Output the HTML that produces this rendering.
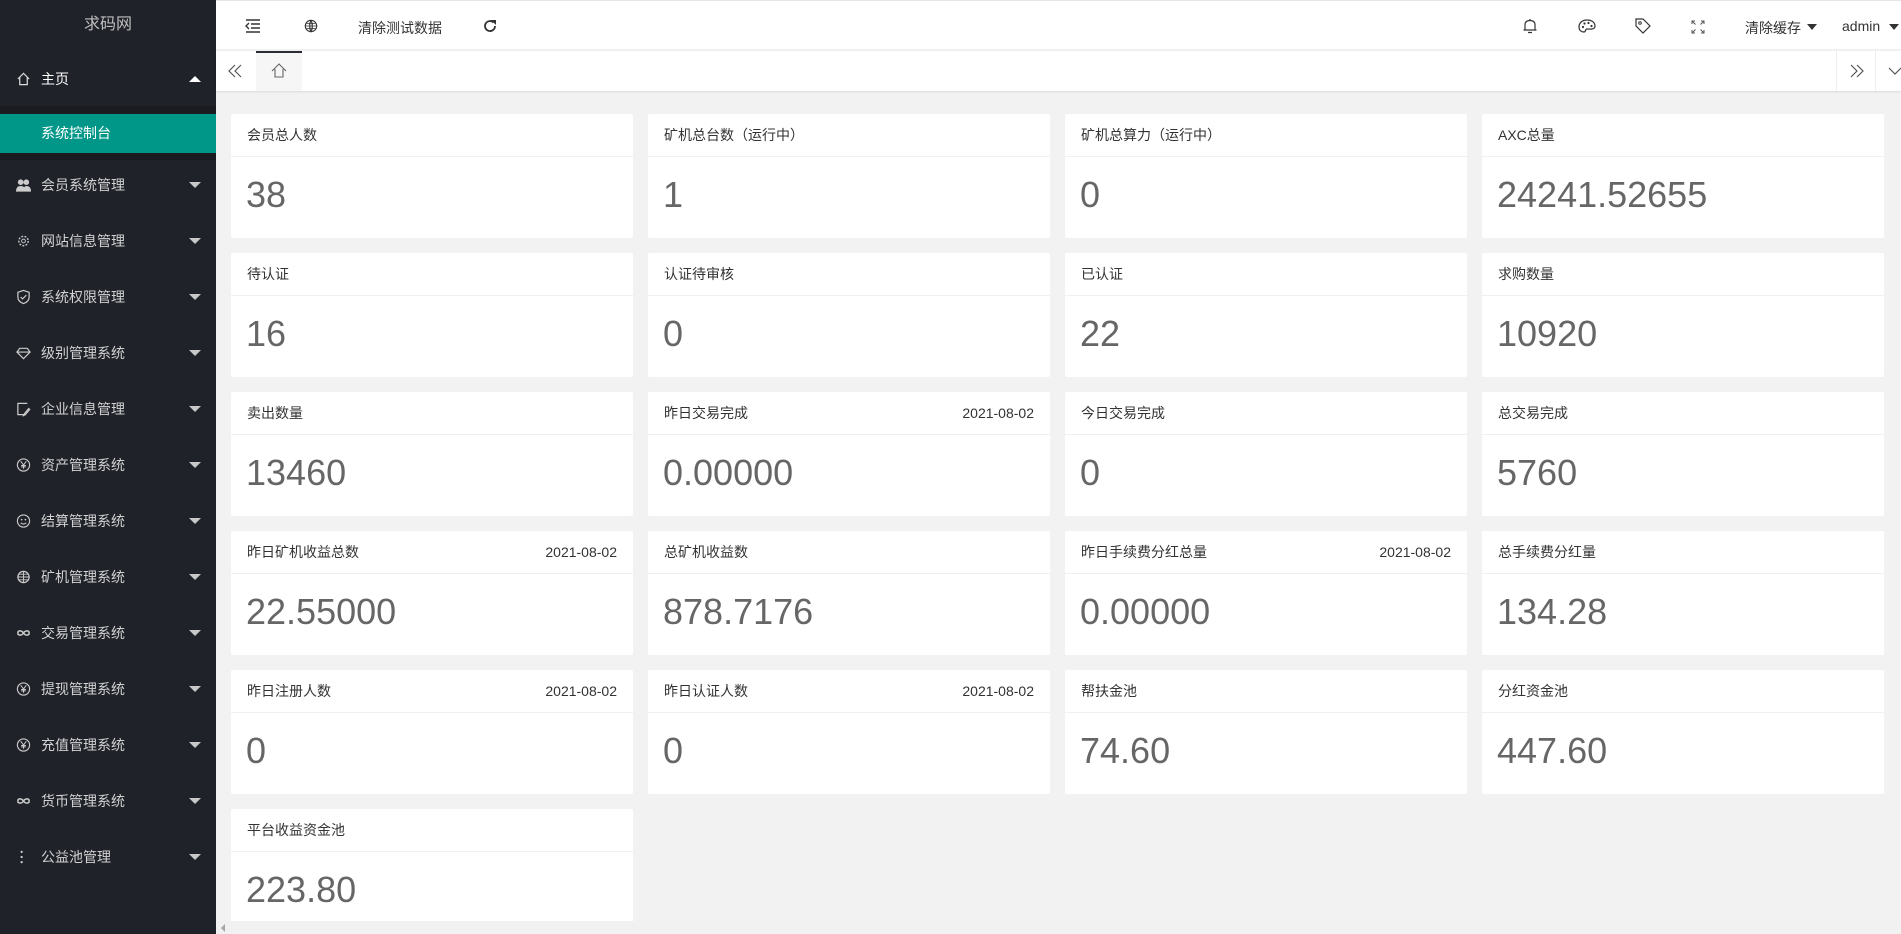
<!DOCTYPE html>
<html><head><meta charset="utf-8"><style>
*{margin:0;padding:0;box-sizing:border-box}
body{width:1901px;height:934px;overflow:hidden;background:#f2f2f2;font-family:"Liberation Sans","Noto Sans CJK SC",sans-serif;position:relative}
.side{position:absolute;left:0;top:0;width:216px;height:934px;background:#20222a}
.logo{height:50px;line-height:50px;text-align:center;color:#bfbfbf;font-size:16px}
.it{position:absolute;left:0;width:216px;height:56px;color:#d2d2d2;font-size:14px}
.it .tx{position:absolute;left:41px;top:50%;transform:translateY(-50%)}
.it .ic{position:absolute;left:16px;top:50%;transform:translateY(-50%);width:15px;height:15px}
.it .ar{position:absolute;left:189px;top:50%;margin-top:-3px;border-left:6px solid transparent;border-right:6px solid transparent;border-top:6px solid #c8c8c8}
.act{position:absolute;left:0;top:114px;width:216px;height:39px;background:#009688;color:#fff;font-size:14px;line-height:39px;padding-left:41px}
.sub{position:absolute;left:0;top:106px;width:216px;height:54px;background:#1a1c22}
.top{position:absolute;left:216px;top:0;width:1685px;height:50px;background:#fff;border-bottom:1px solid #f0f0f0;border-top:1px solid #e6e6e6}
.tabs{position:absolute;left:216px;top:51px;width:1685px;height:40px;background:#fff;box-shadow:0 1px 2px rgba(0,0,0,.1)}
.tt{position:absolute;font-size:14px;color:#333;top:17px}
.card{position:absolute;width:402px;height:124px;background:#fff;border-radius:2px}
.card .h{height:43px;border-bottom:1px solid #f0f0f0;padding:0 16px;line-height:42px;font-size:14px;color:#333;display:flex;justify-content:space-between}
.card .n{font-size:36px;color:#666;padding-left:15px;line-height:76px}
</style></head><body>
<div class="side">
<div class="logo">求码网</div>
<div class="it" style="top:51px"><svg class="ic" viewBox="0 0 16 16"><path d="M2 8L8 2L14 8M4 6V14H12V6" fill="none" stroke="#ddd" stroke-width="1.3"/></svg><span class="tx" style="color:#fff">主页</span><span class="ar" style="border-top:0;border-bottom:6px solid #fff"></span></div>
<div class="sub"></div>
<div class="act">系统控制台</div>
<div class="it" style="top:157px"><svg class="ic" viewBox="0 0 16 16"><circle cx="5" cy="5" r="3" fill="#ccc"/><circle cx="11" cy="5" r="3" fill="#ccc"/><path d="M0 15Q0 9 5 9Q10 9 10 15ZM7 15Q8 9 11 9Q16 9 16 15Z" fill="#ccc"/></svg><span class="tx">会员系统管理</span><span class="ar"></span></div>
<div class="it" style="top:213px"><svg class="ic" viewBox="0 0 16 16"><circle cx="8" cy="8" r="5" fill="none" stroke="#ccc" stroke-width="1.5" stroke-dasharray="2 1.5"/><circle cx="8" cy="8" r="2" fill="none" stroke="#ccc"/></svg><span class="tx">网站信息管理</span><span class="ar"></span></div>
<div class="it" style="top:269px"><svg class="ic" viewBox="0 0 16 16"><path d="M8 1L14 3V8Q14 13 8 15Q2 13 2 8V3Z M5 8L7 10L11 6" fill="none" stroke="#ccc" stroke-width="1.3"/></svg><span class="tx">系统权限管理</span><span class="ar"></span></div>
<div class="it" style="top:325px"><svg class="ic" viewBox="0 0 16 16"><path d="M4 3H12L15 7L8 14L1 7Z M1 7H15" fill="none" stroke="#ccc" stroke-width="1.3"/></svg><span class="tx">级别管理系统</span><span class="ar"></span></div>
<div class="it" style="top:381px"><svg class="ic" viewBox="0 0 16 16"><path d="M12 2H2V14H8M14 7L9 13L8 15L10 14L15 8" fill="none" stroke="#ccc" stroke-width="1.3"/></svg><span class="tx">企业信息管理</span><span class="ar"></span></div>
<div class="it" style="top:437px"><svg class="ic" viewBox="0 0 16 16"><circle cx="8" cy="8" r="6.5" fill="none" stroke="#ccc" stroke-width="1.2"/><path d="M5 4L8 8L11 4M8 8V12M5.5 8.5H10.5M5.5 10H10.5" fill="none" stroke="#ccc" stroke-width="1.1"/></svg><span class="tx">资产管理系统</span><span class="ar"></span></div>
<div class="it" style="top:493px"><svg class="ic" viewBox="0 0 16 16"><circle cx="8" cy="8" r="6.5" fill="none" stroke="#ccc" stroke-width="1.2"/><circle cx="6" cy="6.5" r=".9" fill="#ccc"/><circle cx="10" cy="6.5" r=".9" fill="#ccc"/><path d="M5 10Q8 12.5 11 10" fill="none" stroke="#ccc" stroke-width="1.1"/></svg><span class="tx">结算管理系统</span><span class="ar"></span></div>
<div class="it" style="top:549px"><svg class="ic" viewBox="0 0 16 16"><circle cx="8" cy="8" r="6" fill="none" stroke="#ccc" stroke-width="1.3"/><path d="M2 8H14M8 2V14M3 5H13M3 11H13" stroke="#ccc" stroke-width="1"/></svg><span class="tx">矿机管理系统</span><span class="ar"></span></div>
<div class="it" style="top:605px"><svg class="ic" viewBox="0 0 16 16"><path d="M8 8C6 5 2 5 2 8S6 11 8 8S14 5 14 8S10 11 8 8" fill="none" stroke="#ccc" stroke-width="1.6"/></svg><span class="tx">交易管理系统</span><span class="ar"></span></div>
<div class="it" style="top:661px"><svg class="ic" viewBox="0 0 16 16"><circle cx="8" cy="8" r="6.5" fill="none" stroke="#ccc" stroke-width="1.2"/><path d="M5 4L8 8L11 4M8 8V12M5.5 8.5H10.5M5.5 10H10.5" fill="none" stroke="#ccc" stroke-width="1.1"/></svg><span class="tx">提现管理系统</span><span class="ar"></span></div>
<div class="it" style="top:717px"><svg class="ic" viewBox="0 0 16 16"><circle cx="8" cy="8" r="6.5" fill="none" stroke="#ccc" stroke-width="1.2"/><path d="M5 4L8 8L11 4M8 8V12M5.5 8.5H10.5M5.5 10H10.5" fill="none" stroke="#ccc" stroke-width="1.1"/></svg><span class="tx">充值管理系统</span><span class="ar"></span></div>
<div class="it" style="top:773px"><svg class="ic" viewBox="0 0 16 16"><path d="M8 8C6 5 2 5 2 8S6 11 8 8S14 5 14 8S10 11 8 8" fill="none" stroke="#ccc" stroke-width="1.6"/></svg><span class="tx">货币管理系统</span><span class="ar"></span></div>
<div class="it" style="top:829px"><svg class="ic" viewBox="0 0 16 16"><circle cx="6" cy="2.5" r="1.2" fill="#ccc"/><circle cx="6" cy="8" r="1.2" fill="#ccc"/><circle cx="6" cy="13.5" r="1.2" fill="#ccc"/></svg><span class="tx">公益池管理</span><span class="ar"></span></div>
</div>

<div class="top">
<svg style="position:absolute;left:29px;top:18px" width="16" height="14" viewBox="0 0 16 14"><path d="M1 1H15M6 5H15M6 9H15M1 13H15M4 4L1 7L4 10" fill="none" stroke="#333" stroke-width="1.4"/></svg>
<svg style="position:absolute;left:88px;top:18px" width="14" height="14" viewBox="0 0 16 16"><circle cx="8" cy="8" r="6.5" fill="none" stroke="#333" stroke-width="1.3"/><path d="M1.5 8H14.5M8 1.5V14.5M3 5H13M3 11H13M8 1.5Q4 8 8 14.5Q12 8 8 1.5" fill="none" stroke="#333" stroke-width=".9"/></svg>
<span class="tt" style="left:142px">清除测试数据</span>
<svg style="position:absolute;left:266px;top:17px" width="16" height="16" viewBox="0 0 16 16"><path d="M13 8A5 5 0 1 1 11.5 4.5" fill="none" stroke="#333" stroke-width="1.8"/><path d="M9 2H14V7Z" fill="#333"/></svg>
<svg style="position:absolute;left:1306px;top:17px" width="16" height="17" viewBox="0 0 16 17"><path d="M3 12V7Q3 2.5 8 2.5Q13 2.5 13 7V12H14.5H1.5M6 14.5H10M8 1V2.5" fill="none" stroke="#333" stroke-width="1.2"/></svg>
<svg style="position:absolute;left:1362px;top:17px" width="18" height="16" viewBox="0 0 18 16"><path d="M9 2C4 2 1 5 1 9C1 12 3 14 6 14C8 14 7 11 9 11C12 11 17 12 17 8C17 4 13 2 9 2Z" fill="none" stroke="#333" stroke-width="1.2"/><circle cx="5" cy="9" r="1.1" fill="#333"/><circle cx="6.5" cy="5.5" r="1.1" fill="#333"/><circle cx="10.5" cy="5" r="1.1" fill="#333"/><circle cx="13.5" cy="8" r="1.1" fill="#333"/></svg>
<svg style="position:absolute;left:1418px;top:16px" width="18" height="18" viewBox="0 0 18 18"><path d="M2 2H9L16 9L9 16L2 9Z" fill="none" stroke="#333" stroke-width="1.2"/><circle cx="6" cy="6" r="1.3" fill="none" stroke="#333"/></svg>
<svg style="position:absolute;left:1475px;top:19px" width="14" height="14" viewBox="0 0 14 14"><path d="M1 4V1H4M10 1H13V4M13 10V13H10M4 13H1V10M1 1L4.5 4.5M13 1L9.5 4.5M13 13L9.5 9.5M1 13L4.5 9.5" fill="none" stroke="#555" stroke-width="1"/></svg>
<span class="tt" style="left:1529px">清除缓存</span><span style="position:absolute;left:1591px;top:23px;border-left:5px solid transparent;border-right:5px solid transparent;border-top:6px solid #333"></span>
<span class="tt" style="left:1626px">admin</span><span style="position:absolute;left:1673px;top:23px;border-left:5px solid transparent;border-right:5px solid transparent;border-top:6px solid #333"></span>
</div>

<div class="tabs">
<svg style="position:absolute;left:12px;top:13px" width="14" height="14" viewBox="0 0 14 14"><path d="M7 1L1 7L7 13M13 1L7 7L13 13" fill="none" stroke="#555" stroke-width="1.2"/></svg>
<div style="position:absolute;left:40px;top:0;width:46px;height:40px;background:#f6f6f6;border-top:2px solid #292b34"><svg style="position:absolute;left:15px;top:10px" width="16" height="16" viewBox="0 0 16 16"><path d="M1 8L8 1L15 8M4 6V14H12V6" fill="none" stroke="#666" stroke-width="1.1"/></svg></div>
<div style="position:absolute;left:1620px;top:0;width:40px;height:40px;border-left:1px solid #eee;border-right:1px solid #eee"><svg style="position:absolute;left:13px;top:13px" width="14" height="14" viewBox="0 0 14 14"><path d="M1 1L7 7L1 13M7 1L13 7L7 13" fill="none" stroke="#555" stroke-width="1.2"/></svg></div>
<svg style="position:absolute;left:1672px;top:15px" width="14" height="10" viewBox="0 0 14 10"><path d="M1 2L7 8L13 2" fill="none" stroke="#555" stroke-width="1.2"/></svg>
</div>

<div class="card" style="left:231px;top:114px"><div class="h"><span>会员总人数</span></div><div class="n">38</div></div>
<div class="card" style="left:648px;top:114px"><div class="h"><span>矿机总台数（运行中）</span></div><div class="n">1</div></div>
<div class="card" style="left:1065px;top:114px"><div class="h"><span>矿机总算力（运行中）</span></div><div class="n">0</div></div>
<div class="card" style="left:1482px;top:114px"><div class="h"><span>AXC总量</span></div><div class="n">24241.52655</div></div>

<div class="card" style="left:231px;top:253px"><div class="h"><span>待认证</span></div><div class="n">16</div></div>
<div class="card" style="left:648px;top:253px"><div class="h"><span>认证待审核</span></div><div class="n">0</div></div>
<div class="card" style="left:1065px;top:253px"><div class="h"><span>已认证</span></div><div class="n">22</div></div>
<div class="card" style="left:1482px;top:253px"><div class="h"><span>求购数量</span></div><div class="n">10920</div></div>

<div class="card" style="left:231px;top:392px"><div class="h"><span>卖出数量</span></div><div class="n">13460</div></div>
<div class="card" style="left:648px;top:392px"><div class="h"><span>昨日交易完成</span><span>2021-08-02</span></div><div class="n">0.00000</div></div>
<div class="card" style="left:1065px;top:392px"><div class="h"><span>今日交易完成</span></div><div class="n">0</div></div>
<div class="card" style="left:1482px;top:392px"><div class="h"><span>总交易完成</span></div><div class="n">5760</div></div>

<div class="card" style="left:231px;top:531px"><div class="h"><span>昨日矿机收益总数</span><span>2021-08-02</span></div><div class="n">22.55000</div></div>
<div class="card" style="left:648px;top:531px"><div class="h"><span>总矿机收益数</span></div><div class="n">878.7176</div></div>
<div class="card" style="left:1065px;top:531px"><div class="h"><span>昨日手续费分红总量</span><span>2021-08-02</span></div><div class="n">0.00000</div></div>
<div class="card" style="left:1482px;top:531px"><div class="h"><span>总手续费分红量</span></div><div class="n">134.28</div></div>

<div class="card" style="left:231px;top:670px"><div class="h"><span>昨日注册人数</span><span>2021-08-02</span></div><div class="n">0</div></div>
<div class="card" style="left:648px;top:670px"><div class="h"><span>昨日认证人数</span><span>2021-08-02</span></div><div class="n">0</div></div>
<div class="card" style="left:1065px;top:670px"><div class="h"><span>帮扶金池</span></div><div class="n">74.60</div></div>
<div class="card" style="left:1482px;top:670px"><div class="h"><span>分红资金池</span></div><div class="n">447.60</div></div>

<div class="card" style="left:231px;top:809px"><div class="h"><span>平台收益资金池</span></div><div class="n">223.80</div></div>

<div style="position:absolute;left:216px;top:921px;width:1685px;height:13px;background:#f1f1f1"><span style="position:absolute;left:5px;top:3px;border-top:4px solid transparent;border-bottom:4px solid transparent;border-right:4px solid #a3a3a3"></span></div>
</body></html>
